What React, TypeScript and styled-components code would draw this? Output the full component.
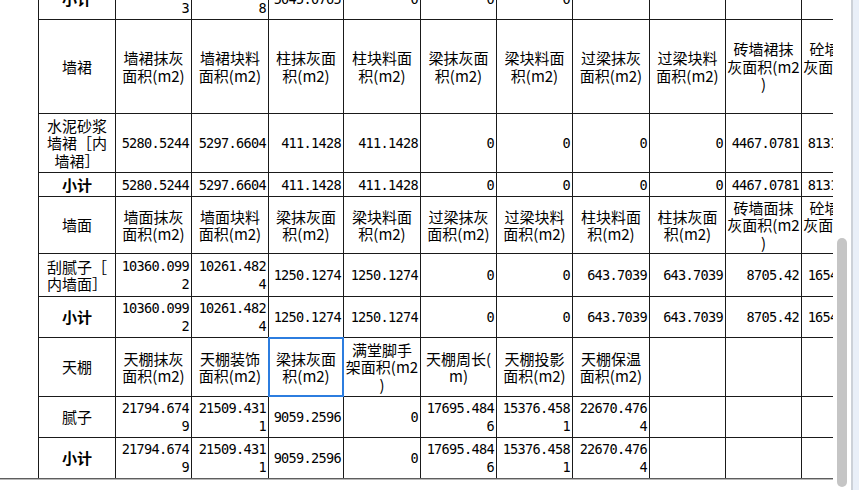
import React, { useLayoutEffect, useRef } from "react";
import styled, { createGlobalStyle, css } from "styled-components";

const GlobalStyle = createGlobalStyle`
  html, body { margin: 0; padding: 0; background: #fff; }
  body { width: 859px; height: 490px; overflow: hidden; }
`;

const COL_WIDTHS = [76, 75, 76, 74, 76, 75, 75, 76, 75, 75, 75];

type RowKind = "header" | "data" | "total";
interface RowDef {
  kind: RowKind;
  height: number;
  cells: string[];
  selected?: number;
}

const ROWS: RowDef[] = [
  {
    kind: "total",
    height: 41,
    cells: ["小计", "18617.416\n3", "18592.304\n8", "5045.0765", "0", "0", "0", "", "", "", ""],
  },
  {
    kind: "header",
    height: 93,
    cells: [
      "墙裙",
      "墙裙抹灰\n面积(m2)",
      "墙裙块料\n面积(m2)",
      "柱抹灰面\n积(m2)",
      "柱块料面\n积(m2)",
      "梁抹灰面\n积(m2)",
      "梁块料面\n积(m2)",
      "过梁抹灰\n面积(m2)",
      "过梁块料\n面积(m2)",
      "砖墙裙抹\n灰面积(m2\n)",
      "砼墙裙抹\n灰面积(m2\n)",
    ],
  },
  {
    kind: "data",
    height: 58,
    cells: ["水泥砂浆\n墙裙［内\n墙裙］", "5280.5244", "5297.6604", "411.1428", "411.1428", "0", "0", "0", "0", "4467.0781", "8131.4463"],
  },
  {
    kind: "total",
    height: 23,
    cells: ["小计", "5280.5244", "5297.6604", "411.1428", "411.1428", "0", "0", "0", "0", "4467.0781", "8131.4463"],
  },
  {
    kind: "header",
    height: 56,
    cells: [
      "墙面",
      "墙面抹灰\n面积(m2)",
      "墙面块料\n面积(m2)",
      "梁抹灰面\n积(m2)",
      "梁块料面\n积(m2)",
      "过梁抹灰\n面积(m2)",
      "过梁块料\n面积(m2)",
      "柱块料面\n积(m2)",
      "柱抹灰面\n积(m2)",
      "砖墙面抹\n灰面积(m2\n)",
      "砼墙面抹\n灰面积(m2\n)",
    ],
  },
  {
    kind: "data",
    height: 42,
    cells: ["刮腻子［\n内墙面］", "10360.099\n2", "10261.482\n4", "1250.1274", "1250.1274", "0", "0", "643.7039", "643.7039", "8705.42", "1654.3192"],
  },
  {
    kind: "total",
    height: 40,
    cells: ["小计", "10360.099\n2", "10261.482\n4", "1250.1274", "1250.1274", "0", "0", "643.7039", "643.7039", "8705.42", "1654.3192"],
  },
  {
    kind: "header",
    height: 58,
    selected: 3,
    cells: [
      "天棚",
      "天棚抹灰\n面积(m2)",
      "天棚装饰\n面积(m2)",
      "梁抹灰面\n积(m2)",
      "满堂脚手\n架面积(m2\n)",
      "天棚周长(\nm)",
      "天棚投影\n面积(m2)",
      "天棚保温\n面积(m2)",
      "",
      "",
      "",
    ],
  },
  {
    kind: "data",
    height: 40,
    cells: ["腻子", "21794.674\n9", "21509.431\n1", "9059.2596", "0", "17695.484\n6", "15376.458\n1", "22670.476\n4", "", "", ""],
  },
  {
    kind: "total",
    height: 40,
    cells: ["小计", "21794.674\n9", "21509.431\n1", "9059.2596", "0", "17695.484\n6", "15376.458\n1", "22670.476\n4", "", "", ""],
  },
];

const Frame = styled.div`
  display: flex;
  width: 859px;
  height: 490px;
  background: #fff;
`;

const Main = styled.div`
  width: 833px;
  flex: none;
  display: flex;
  flex-direction: column;
`;

const Viewport = styled.div`
  box-sizing: border-box;
  width: 833px;
  height: 479px;
  padding-left: 38px;
  overflow: hidden;
  border-bottom: 1px solid #5e5e5e;
  box-shadow: 0 1px 0 #b8b8b8;
`;

const Sheet = styled.div<{ $rows: string }>`
  display: grid;
  grid-template-columns: ${COL_WIDTHS.map((w) => `${w}px`).join(" ")};
  grid-template-rows: ${(p) => p.$rows};
  gap: 1px;
  padding: 1px;
  width: max-content;
  background: #1a1a1a;
`;

const Cell = styled.div<{
  $num: boolean;
  $bold: boolean;
  $selected: boolean;
}>`
  background: #fff;
  color: #000;
  display: flex;
  align-items: center;
  justify-content: ${(p) => (p.$num ? "flex-end" : "center")};
  text-align: ${(p) => (p.$num ? "right" : "center")};
  white-space: pre;
  padding: ${(p) => (p.$num ? "0 2px 0 0" : "0 2px")};
  overflow: hidden;
  ${(p) =>
    p.$num
      ? css`
          font-family: "DejaVu Sans Mono", "Liberation Mono", monospace;
          font-size: 13.6px;
          letter-spacing: -0.7px;
          line-height: 18px;
        `
      : css`
          font-family: "Noto Sans CJK SC", "Noto Sans", sans-serif;
          font-size: 15px;
          line-height: 17.5px;
          font-weight: ${p.$bold ? 700 : 400};
        `}
  ${(p) =>
    p.$selected &&
    css`
      position: relative;
      z-index: 1;
      outline: 2px solid #2c7ddf;
      outline-offset: -1px;
    `}
`;

const Track = styled.div`
  box-sizing: border-box;
  width: 18px;
  flex: none;
  padding: 238px 0 3px 4px;
  display: flex;
  flex-direction: column;
  background: #fff;
`;

const Thumb = styled.div`
  flex: 1;
  width: 10px;
  border-radius: 5px;
  background: #c5c5c5;
`;

const SidePanel = styled.div`
  flex: 1;
  border-left: 2px solid #ccd1d8;
  background: #e9eff8;
`;

export default function App() {
  const viewRef = useRef<HTMLDivElement>(null);

  useLayoutEffect(() => {
    if (viewRef.current) viewRef.current.scrollTop = 23;
  }, []);

  const rowTemplate = ROWS.map((r) => `${r.height}px`).join(" ");

  return (
    <>
      <GlobalStyle />
      <Frame>
        <Main>
          <Viewport ref={viewRef}>
            <Sheet $rows={rowTemplate}>
              {ROWS.map((row, ri) =>
                row.cells.map((text, ci) => {
                  const isNum = ci > 0 && row.kind !== "header";
                  return (
                    <Cell
                      key={`${ri}-${ci}`}
                      $num={isNum}
                      $bold={ci === 0 && row.kind === "total"}
                      $selected={row.selected === ci}
                    >
                      {text}
                    </Cell>
                  );
                })
              )}
            </Sheet>
          </Viewport>
        </Main>
        <Track>
          <Thumb />
        </Track>
        <SidePanel />
      </Frame>
    </>
  );
}
